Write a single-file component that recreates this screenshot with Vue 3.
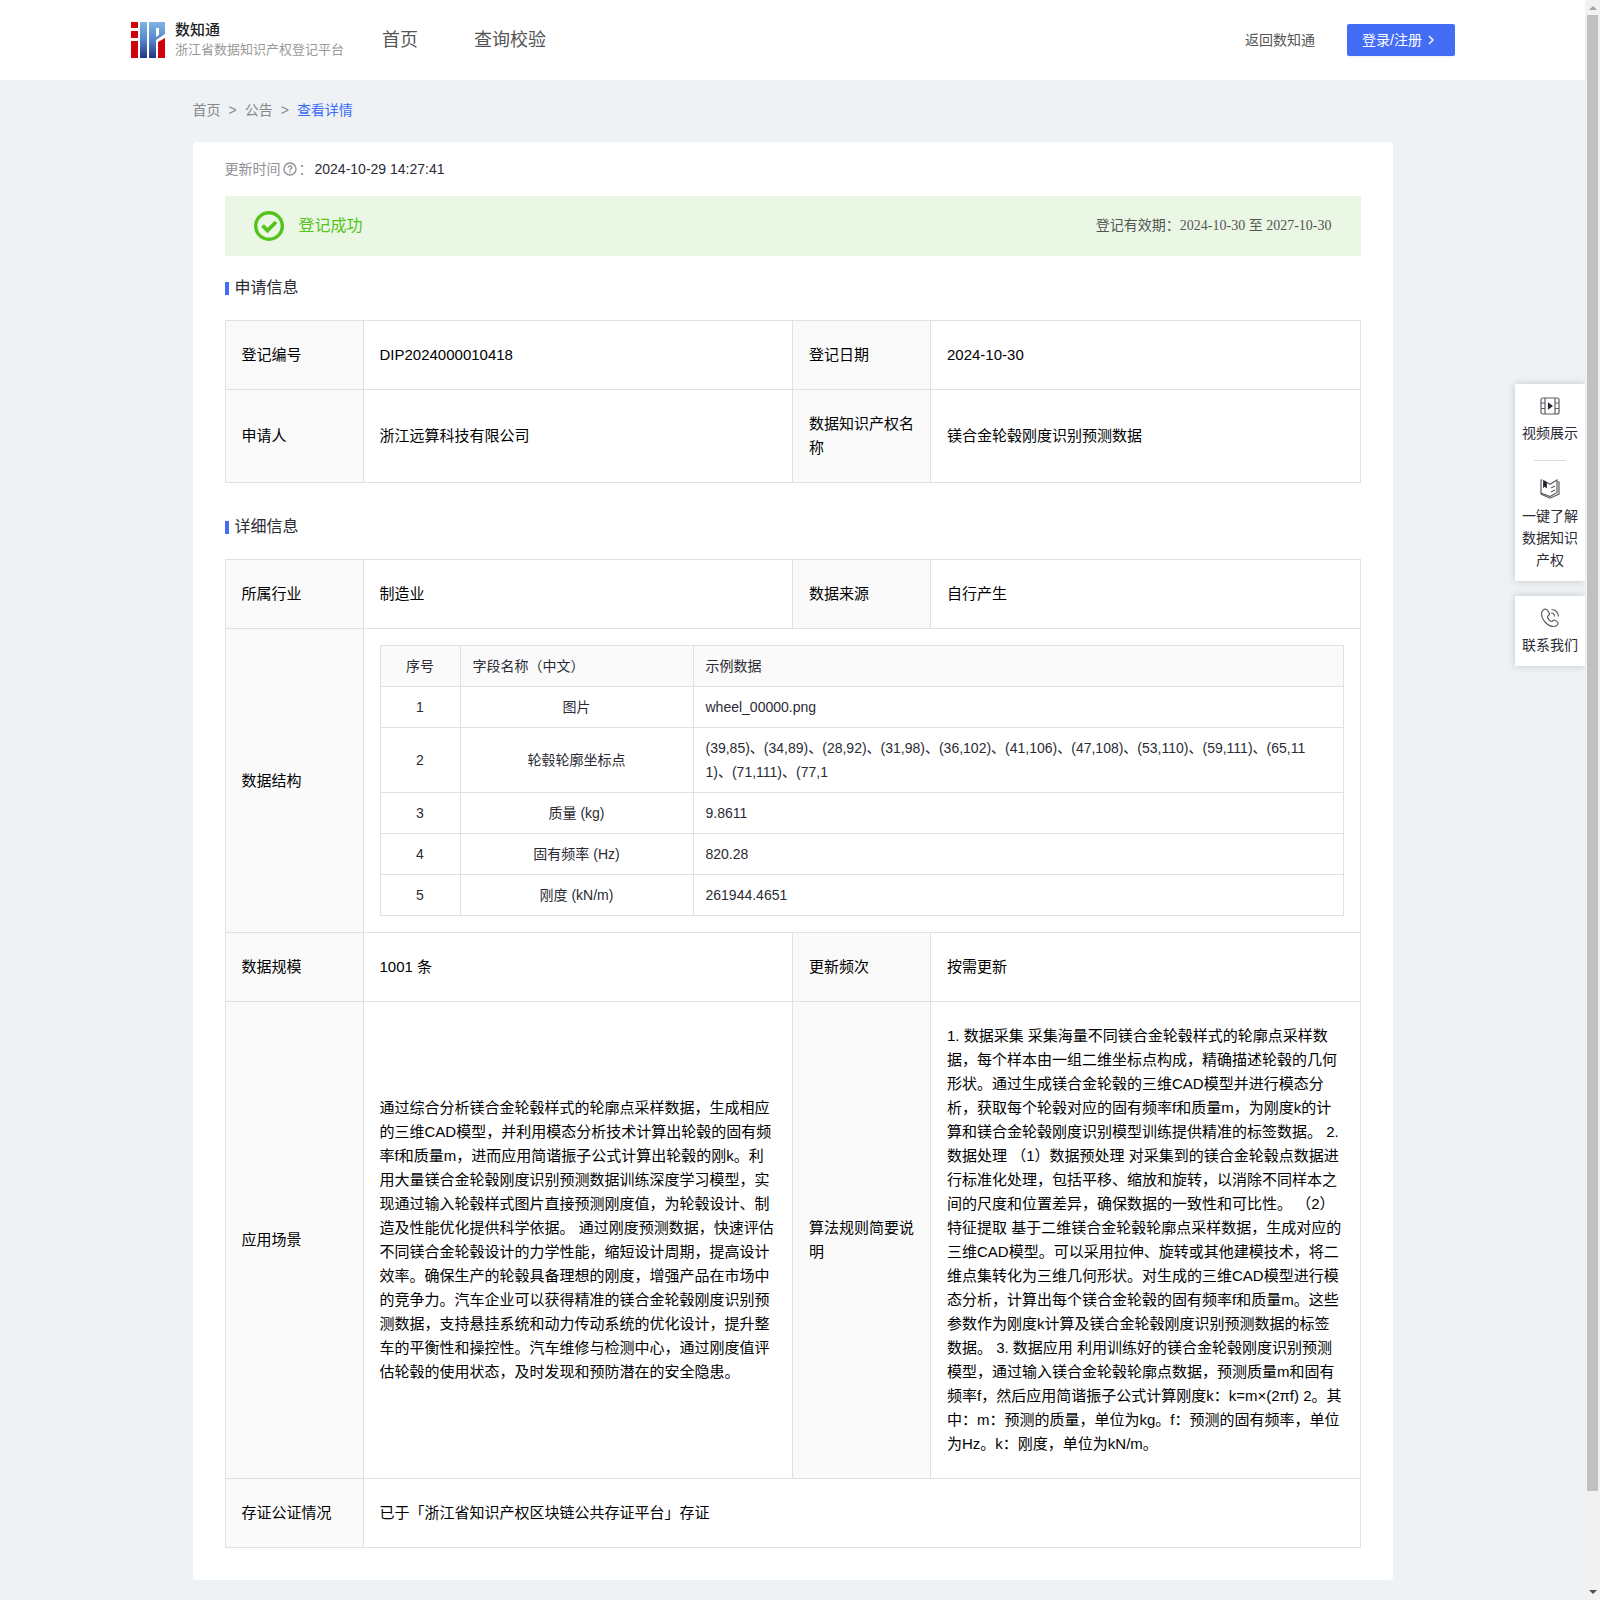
<script setup>
const applyRows = [
  ['登记编号', 'DIP2024000010418', '登记日期', '2024-10-30'],
  ['申请人', '浙江远算科技有限公司', '数据知识产权名称', '镁合金轮毂刚度识别预测数据'],
]

const fields = [
  ['图片', 'wheel_00000.png'],
  ['轮毂轮廓坐标点', '(39,85)、(34,89)、(28,92)、(31,98)、(36,102)、(41,106)、(47,108)、(53,110)、(59,111)、(65,111)、(71,111)、(77,1'],
  ['质量 (kg)', '9.8611'],
  ['固有频率 (Hz)', '820.28'],
  ['刚度 (kN/m)', '261944.4651'],
]

const scenario = '通过综合分析镁合金轮毂样式的轮廓点采样数据，生成相应的三维CAD模型，并利用模态分析技术计算出轮毂的固有频率f和质量m，进而应用简谐振子公式计算出轮毂的刚k。利用大量镁合金轮毂刚度识别预测数据训练深度学习模型，实现通过输入轮毂样式图片直接预测刚度值，为轮毂设计、制造及性能优化提供科学依据。 通过刚度预测数据，快速评估不同镁合金轮毂设计的力学性能，缩短设计周期，提高设计效率。确保生产的轮毂具备理想的刚度，增强产品在市场中的竞争力。汽车企业可以获得精准的镁合金轮毂刚度识别预测数据，支持悬挂系统和动力传动系统的优化设计，提升整车的平衡性和操控性。汽车维修与检测中心，通过刚度值评估轮毂的使用状态，及时发现和预防潜在的安全隐患。'

const algorithm = '1. 数据采集 采集海量不同镁合金轮毂样式的轮廓点采样数据，每个样本由一组二维坐标点构成，精确描述轮毂的几何形状。通过生成镁合金轮毂的三维CAD模型并进行模态分析，获取每个轮毂对应的固有频率f和质量m，为刚度k的计算和镁合金轮毂刚度识别模型训练提供精准的标签数据。 2. 数据处理 （1）数据预处理 对采集到的镁合金轮毂点数据进行标准化处理，包括平移、缩放和旋转，以消除不同样本之间的尺度和位置差异，确保数据的一致性和可比性。 （2）特征提取 基于二维镁合金轮毂轮廓点采样数据，生成对应的三维CAD模型。可以采用拉伸、旋转或其他建模技术，将二维点集转化为三维几何形状。对生成的三维CAD模型进行模态分析，计算出每个镁合金轮毂的固有频率f和质量m。这些参数作为刚度k计算及镁合金轮毂刚度识别预测数据的标签数据。 3. 数据应用 利用训练好的镁合金轮毂刚度识别预测模型，通过输入镁合金轮毂轮廓点数据，预测质量m和固有频率f，然后应用简谐振子公式计算刚度k：k=m×(2πf) 2。其中：m：预测的质量，单位为kg。f：预测的固有频率，单位为Hz。k：刚度，单位为kN/m。'
</script>

<template>
  <div class="shell">
    <div class="page">
      <header class="topbar">
        <div class="topbar-inner">
          <a href="#" class="brand">
            <svg class="logo" viewBox="0 0 34 36" aria-hidden="true">
              <defs>
                <linearGradient id="blue" x1="0" y1="0" x2="0" y2="36" gradientUnits="userSpaceOnUse">
                  <stop offset="0" stop-color="#80b4e4" />
                  <stop offset="0.5" stop-color="#5486cc" />
                  <stop offset="1" stop-color="#21367e" />
                </linearGradient>
              </defs>
              <path fill="#d0020c" d="M0 0h7v6H0zM0 9h7v7H0zM0 19h7v17H0zM27 20l7-4v20h-7z" />
              <path fill="url(#blue)" d="M9 0h7v36H9zM18 0h16v12l-9 6v18h-7zM25 6v9l3-2V6z" fill-rule="evenodd" />
            </svg>
            <span class="brand-text">
              <strong>数知通</strong>
              <small>浙江省数据知识产权登记平台</small>
            </span>
          </a>
          <nav class="nav">
            <a href="#">首页</a>
            <a href="#">查询校验</a>
          </nav>
          <a href="#" class="back">返回数知通</a>
          <button type="button" class="login">
            <span>登录/注册</span>
            <svg viewBox="0 0 12 12" aria-hidden="true"><path d="M4 2l4 4-4 4" fill="none" stroke="#fff" stroke-width="1.4" /></svg>
          </button>
        </div>
      </header>

      <main class="content">
        <nav class="crumbs">
          <a href="#">首页</a><span>&gt;</span><a href="#">公告</a><span>&gt;</span><a href="#" class="current">查看详情</a>
        </nav>

        <article class="card">
          <p class="updated">
            <span>更新时间</span>
            <svg viewBox="0 0 14 14" aria-hidden="true">
              <circle cx="7" cy="7" r="6" fill="none" stroke="#8f9196" stroke-width="1.4" />
              <path d="M5.2 5.6a1.8 1.8 0 1 1 2.600 1.600c-.6.3-.8.6-.8 1.200M7 9.600v1.200" fill="none" stroke="#8f9196" stroke-width="1.3" />
            </svg>
            <span>：</span>
            <time>2024-10-29 14:27:41</time>
          </p>

          <div class="banner">
            <svg viewBox="0 0 30 30" aria-hidden="true">
              <circle cx="15" cy="15" r="13.3" fill="none" stroke="#52c41a" stroke-width="3.400" />
              <path d="M8.500 14.500l5 5 8.500-8.500" fill="none" stroke="#52c41a" stroke-width="3.800" />
            </svg>
            <strong>登记成功</strong>
            <span class="validity">登记有效期：<time>2024-10-30</time> 至 <time>2027-10-30</time></span>
          </div>

          <h2>申请信息</h2>
          <table class="info">
            <colgroup><col class="label"><col><col class="label"><col></colgroup>
            <tbody>
              <tr v-for="row in applyRows" :key="row[0]">
                <th scope="row">{{ row[0] }}</th>
                <td>{{ row[1] }}</td>
                <th scope="row">{{ row[2] }}</th>
                <td>{{ row[3] }}</td>
              </tr>
            </tbody>
          </table>

          <h2>详细信息</h2>
          <table class="info">
            <colgroup><col class="label"><col><col class="label"><col></colgroup>
            <tbody>
              <tr>
                <th scope="row">所属行业</th>
                <td>制造业</td>
                <th scope="row">数据来源</th>
                <td>自行产生</td>
              </tr>
              <tr>
                <th scope="row">数据结构</th>
                <td colspan="3" class="nested">
                  <table class="fields">
                    <colgroup><col class="index"><col class="name"><col></colgroup>
                    <thead>
                      <tr>
                        <th scope="col" class="center">序号</th>
                        <th scope="col">字段名称（中文）</th>
                        <th scope="col">示例数据</th>
                      </tr>
                    </thead>
                    <tbody>
                      <tr v-for="(field, i) in fields" :key="field[0]">
                        <td class="center">{{ i + 1 }}</td>
                        <td class="center">{{ field[0] }}</td>
                        <td class="sample">{{ field[1] }}</td>
                      </tr>
                    </tbody>
                  </table>
                </td>
              </tr>
              <tr>
                <th scope="row">数据规模</th>
                <td>1001 条</td>
                <th scope="row">更新频次</th>
                <td>按需更新</td>
              </tr>
              <tr>
                <th scope="row">应用场景</th>
                <td>{{ scenario }}</td>
                <th scope="row">算法规则简要说明</th>
                <td>{{ algorithm }}</td>
              </tr>
              <tr>
                <th scope="row">存证公证情况</th>
                <td colspan="3">已于「浙江省知识产权区块链公共存证平台」存证</td>
              </tr>
            </tbody>
          </table>
        </article>
      </main>

      <aside class="rail">
        <div class="rail-group">
          <a href="#" class="rail-item">
            <svg viewBox="0 0 20 20" fill="none" stroke="#5c5c64" stroke-width="1.2" aria-hidden="true">
              <rect x="1" y="2" width="18" height="16" rx="2" />
              <path d="M5 2v16M15 2v16M1 7h4M1 12.500h4M15 7h4M15 12.500h4" />
              <path d="M8.500 7.500v5l3.500-2.500z" fill="#26262e" stroke="#26262e" />
            </svg>
            <span>视频展示</span>
          </a>
          <hr>
          <a href="#" class="rail-item">
            <svg viewBox="0 0 20 20" fill="none" stroke="#5c5c64" stroke-width="1.2" aria-hidden="true">
              <path d="M2.500 1H1v14l9 4.200 9-4.200V3h-1.500" />
              <path d="M7 3.500l3 1.700L17 1v12.500L10 17.500 1 14" />
              <path d="M11 9l4-2M11 13l4-2" />
              <path d="M3.500 1.500v7l1.500-1.500 1.500 2V3z" fill="#26262e" stroke="#26262e" stroke-width="0.800" />
            </svg>
            <span>一键了解数据知识产权</span>
          </a>
        </div>
        <div class="rail-group">
          <a href="#" class="rail-item">
            <svg viewBox="0 0 20 20" fill="none" stroke="#5c5c64" stroke-width="1.2" aria-hidden="true">
              <path d="M6.500 1.500c-2-1-5 1-5 4 0 6 6 13 12 13 2.500 0 4.500-1.500 4.500-3.500 0-1-3-3-4-3s-1.500 1.500-2.500 1.500-4-3-4-4.500S9.500 7 9.500 6s-2-4-3-4.500z" />
              <path d="M11 5c2 0 3.500 1.500 3.500 3.500M11.500 1.500c4 0 7 3 7 7" />
            </svg>
            <span>联系我们</span>
          </a>
        </div>
      </aside>
    </div>

    <div class="scrollbar" aria-hidden="true">
      <svg viewBox="0 0 15 15"><path d="M4 10l4-4 4 4z" fill="#a3a3a3" /></svg>
      <div class="track"><div class="thumb"></div></div>
      <svg viewBox="0 0 15 15"><path d="M4 5l4 4 4-4z" fill="#505050" /></svg>
    </div>
  </div>
</template>

<style>
body {
  margin: 0;
  background: #eef2f5;
}
</style>

<style scoped>
.shell {
  display: flex;
  min-height: 100vh;
  font: 14px/24px "Liberation Sans", "Noto Sans CJK SC", sans-serif;
  color: #2b2b35;
  text-spacing-trim: space-all;
}
.shell *, .shell {
  box-sizing: border-box;
}
a {
  color: inherit;
  text-decoration: none;
}
.page {
  position: relative;
  flex: 1;
  min-width: 0;
  background: #eef2f5;
}
.topbar {
  background: #fff;
}
.topbar-inner {
  display: flex;
  align-items: center;
  height: 80px;
  max-width: 1325px;
  margin: 0 auto;
  padding-left: 1px;
  color: #555;
}
.brand {
  display: flex;
  align-items: center;
  gap: 10px;
}
.logo {
  width: 34px;
  height: 36px;
}
.brand-text {
  display: flex;
  flex-direction: column;
}
.brand-text strong {
  font-size: 15px;
  line-height: 20px;
  font-weight: 500;
  color: #222;
}
.brand-text small {
  font-size: 13px;
  line-height: 20px;
  color: #999;
}
.nav {
  display: flex;
  gap: 56px;
  margin-left: 38px;
  font-size: 18px;
}
.back {
  margin-left: auto;
}
.login {
  display: flex;
  align-items: center;
  gap: 3px;
  width: 108px;
  height: 32px;
  margin-left: 32px;
  padding: 0 15px;
  border: 0;
  border-radius: 2px;
  background: #446df6;
  box-shadow: 0 2px 0 rgba(0, 0, 0, 0.04);
  color: #fff;
  font: inherit;
  white-space: nowrap;
}
.login svg {
  flex: none;
  width: 12px;
  height: 12px;
}
.content {
  max-width: 1200px;
  margin: 0 auto;
  padding-bottom: 20px;
}
.crumbs {
  display: flex;
  gap: 8px;
  padding: 18px 0 20px;
  color: #888;
}
.crumbs .current {
  color: #3c6cf5;
}
.card {
  padding: 15px 32px 32px;
  border-radius: 4px;
  background: #fff;
}
.updated {
  display: flex;
  align-items: center;
  margin: 0 0 15px;
  color: #8f9196;
}
.updated svg {
  width: 14px;
  height: 14px;
  margin: 0 2px;
}
.updated time {
  margin-left: 2px;
  color: #2b2b35;
}
.banner {
  display: flex;
  align-items: center;
  height: 60px;
  padding: 0 29px;
  background: #ebf7e5;
}
.banner svg {
  width: 30px;
  height: 30px;
}
.banner strong {
  margin-left: 15px;
  font-size: 16px;
  font-weight: 400;
  color: #52c41a;
}
.validity {
  margin-left: auto;
  font-family: "Liberation Serif", "Noto Sans CJK SC", serif;
  color: #555;
}
h2 {
  display: flex;
  align-items: center;
  gap: 6px;
  margin: 20px 0;
  font-size: 16px;
  line-height: 24px;
  font-weight: 400;
}
h2::before {
  content: "";
  width: 4px;
  height: 13px;
  background: #446df6;
}
.info + h2 {
  margin-top: 32px;
}
table {
  width: 100%;
  table-layout: fixed;
  border-collapse: collapse;
}
th {
  background: #fafafa;
  font-weight: 400;
  text-align: left;
}
th, td {
  border: 1px solid #e1e1e1;
}
.info {
  font-size: 15px;
  color: #000;
}
.info .label {
  width: 138px;
}
.info th, .info td {
  padding: 22px 16px;
}
.info .nested {
  padding: 16px;
}
.fields {
  font-size: 14px;
  color: #2b2b35;
}
.fields .index {
  width: 80px;
}
.fields .name {
  width: 233px;
}
.info .fields th, .info .fields td {
  padding: 8px 12px;
}
.info .fields .center {
  text-align: center;
}
.fields .sample {
  word-break: break-all;
}
.rail {
  position: absolute;
  top: 384px;
  right: 0;
  display: flex;
  flex-direction: column;
  gap: 15px;
  width: 70px;
}
.rail-group {
  padding: 12px 7px 10px;
  background: #fff;
  box-shadow: 0 0 8px rgba(0, 0, 0, 0.18);
  clip-path: inset(-10px 0 -10px -10px);
}
.rail-item {
  display: flex;
  flex-direction: column;
  align-items: center;
  gap: 6px;
  line-height: 22px;
  text-align: center;
}
.rail-item svg {
  width: 20px;
  height: 20px;
}
.rail hr {
  width: 32px;
  margin: 16px auto 18px;
  border: 0;
  border-top: 1px solid #ddd;
}
.scrollbar {
  display: flex;
  flex-direction: column;
  flex: none;
  width: 15px;
  background: #f1f1f1;
}
.scrollbar svg {
  width: 15px;
  height: 15px;
}
.track {
  flex: 1;
  padding: 0 2px;
}
.thumb {
  height: 94%;
  background: #c1c1c1;
}
</style>
